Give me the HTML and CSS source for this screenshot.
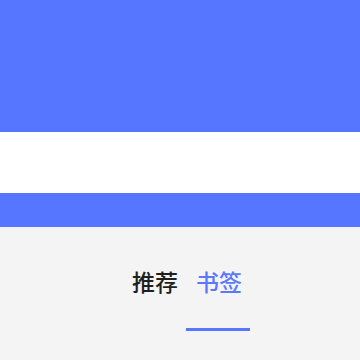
FILE: index.html
```html
<!DOCTYPE html>
<html lang="zh-CN">
<head>
    <meta charset="UTF-8">
    <meta name="viewport" content="width=device-width, initial-scale=1.0">
    <title>书签</title>
    <link rel="stylesheet" href="styles.css">
</head>
<body>
    <!-- 顶部 -->
    <header class="top-bar"></header>
    <div class="search-bar"></div>
    <div class="sub-bar"></div>

    <!-- 标签切换 -->
    <nav class="tabs">
        <div class="tab">
            <span class="tab-label">推荐</span>
            <span class="tab-line"></span>
        </div>
        <div class="tab active">
            <span class="tab-label">书签</span>
            <span class="tab-line"></span>
        </div>
    </nav>
</body>
</html>
```

FILE: styles.css
```css
body {
    margin: 0;
    padding: 0;
    background-color: #f4f4f4;
    font-family: "Noto Sans CJK SC", "Noto Sans", sans-serif;
}

.top-bar {
    height: 132px;
    background-color: #5776ff;
}

.search-bar {
    height: 61px;
    background-color: #fff;
}

.sub-bar {
    height: 34px;
    background-color: #5776ff;
}

.tabs {
    display: flex;
    padding-left: 123px;
}

.tab {
    width: 64px;
    display: flex;
    flex-direction: column;
    align-items: center;
}

.tab-label {
    margin-top: 42px;
    font-size: 23px;
    font-weight: 500;
    line-height: 24px;
    color: #1f1f1f;
}

.tab-line {
    width: 64px;
    height: 3px;
    margin-top: 35px;
    margin-left: -2px;
    background-color: transparent;
}

.tab.active .tab-label {
    color: #5b78ff;
}

.tab.active .tab-line {
    background-color: #5776ff;
}
```
